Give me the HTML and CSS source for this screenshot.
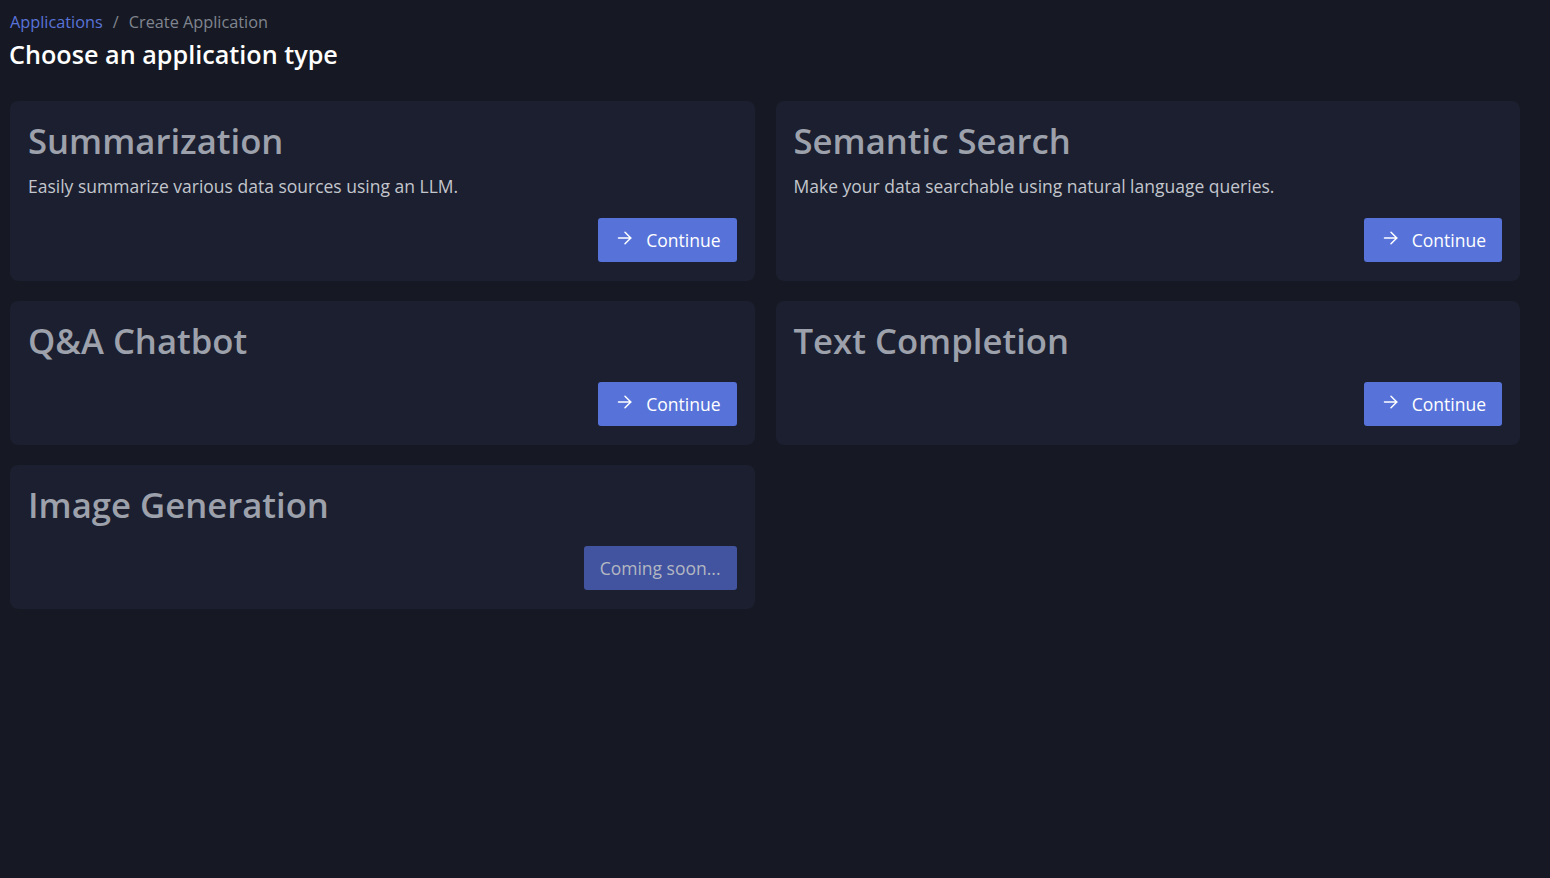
FILE: index.html
```html
<!DOCTYPE html>
<html>
<head>
<meta charset="utf-8">
<link rel="stylesheet" href="styles.css">
</head>
<body>
<div class="page">
  <nav class="crumbs"><a class="crumb-link">Applications</a><span class="sep">/</span><span class="crumb-current">Create Application</span></nav>
  <h1 class="page-title">Choose an application type</h1>
  <div class="grid">
    <div class="card">
      <h2 class="card-title">Summarization</h2>
      <p class="card-desc">Easily summarize various data sources using an LLM.</p>
      <div class="card-actions"><button class="btn"><svg class="icon" viewBox="0 0 16 16" width="16" height="16"><path d="M1.5 8h12.5M8 2.2L13.8 8L8 13.8" fill="none" stroke="currentColor" stroke-width="1.5" stroke-linecap="round" stroke-linejoin="round"/></svg>Continue</button></div>
    </div>
    <div class="card">
      <h2 class="card-title">Semantic Search</h2>
      <p class="card-desc">Make your data searchable using natural language queries.</p>
      <div class="card-actions"><button class="btn"><svg class="icon" viewBox="0 0 16 16" width="16" height="16"><path d="M1.5 8h12.5M8 2.2L13.8 8L8 13.8" fill="none" stroke="currentColor" stroke-width="1.5" stroke-linecap="round" stroke-linejoin="round"/></svg>Continue</button></div>
    </div>
    <div class="card">
      <h2 class="card-title">Q&amp;A Chatbot</h2>
      <div class="card-actions"><button class="btn"><svg class="icon" viewBox="0 0 16 16" width="16" height="16"><path d="M1.5 8h12.5M8 2.2L13.8 8L8 13.8" fill="none" stroke="currentColor" stroke-width="1.5" stroke-linecap="round" stroke-linejoin="round"/></svg>Continue</button></div>
    </div>
    <div class="card">
      <h2 class="card-title">Text Completion</h2>
      <div class="card-actions"><button class="btn"><svg class="icon" viewBox="0 0 16 16" width="16" height="16"><path d="M1.5 8h12.5M8 2.2L13.8 8L8 13.8" fill="none" stroke="currentColor" stroke-width="1.5" stroke-linecap="round" stroke-linejoin="round"/></svg>Continue</button></div>
    </div>
    <div class="card">
      <h2 class="card-title">Image Generation</h2>
      <div class="card-actions"><button class="btn btn-disabled">Coming soon...</button></div>
    </div>
  </div>
</div>
</body>
</html>
```
FILE: styles.css
```css
html, body {
  margin: 0;
  padding: 0;
  background: #161923;
  height: 100%;
}
body {
  font-family: "Open Sans", "Noto Sans", sans-serif;
  color: #fff;
}
.page {
  padding: 10px 30px 0 10px;
}
.crumbs {
  font-size: 16.3px;
  line-height: 24px;
  display: flex;
  align-items: center;
}
.crumb-link {
  color: #5a73d9;
}
.sep {
  color: #80858f;
  margin: 0 10px;
}
.crumb-current {
  color: #80858f;
}
.page-title {
  margin: 2px 0 0 -1px;
  font-size: 25.2px;
  line-height: 36px;
  font-weight: 600;
  color: #fff;
}
.grid {
  margin-top: 29px;
  display: grid;
  grid-template-columns: 1fr 1fr;
  gap: 20px 21px;
  align-items: start;
}
.card {
  background: #1b1f2f;
  border-radius: 8px;
  padding: 16px 18px 19px 18px;
}
.card-title {
  margin: 0;
  font-size: 34.7px;
  line-height: 48px;
  font-weight: 600;
  color: #9da1ab;
}
.card-desc {
  margin: 9px 0 0;
  font-size: 17.5px;
  line-height: 24px;
  color: #c3c6cd;
}
.card-actions {
  display: flex;
  justify-content: flex-end;
  margin-top: 17px;
}
.card-desc + .card-actions {
  margin-top: 20px;
}
.btn {
  font-family: inherit;
  display: inline-flex;
  align-items: center;
  gap: 13px;
  height: 44px;
  padding: 0 16px 0 19px;
  border: none;
  border-radius: 3px;
  background: #5773d9;
  color: #fff;
  font-size: 17.5px;
  cursor: pointer;
}
.icon {
  margin-top: -4px;
}
.btn-disabled {
  background: #4254a0;
  color: #b3b7c2;
  padding: 0 16px;
}
```
